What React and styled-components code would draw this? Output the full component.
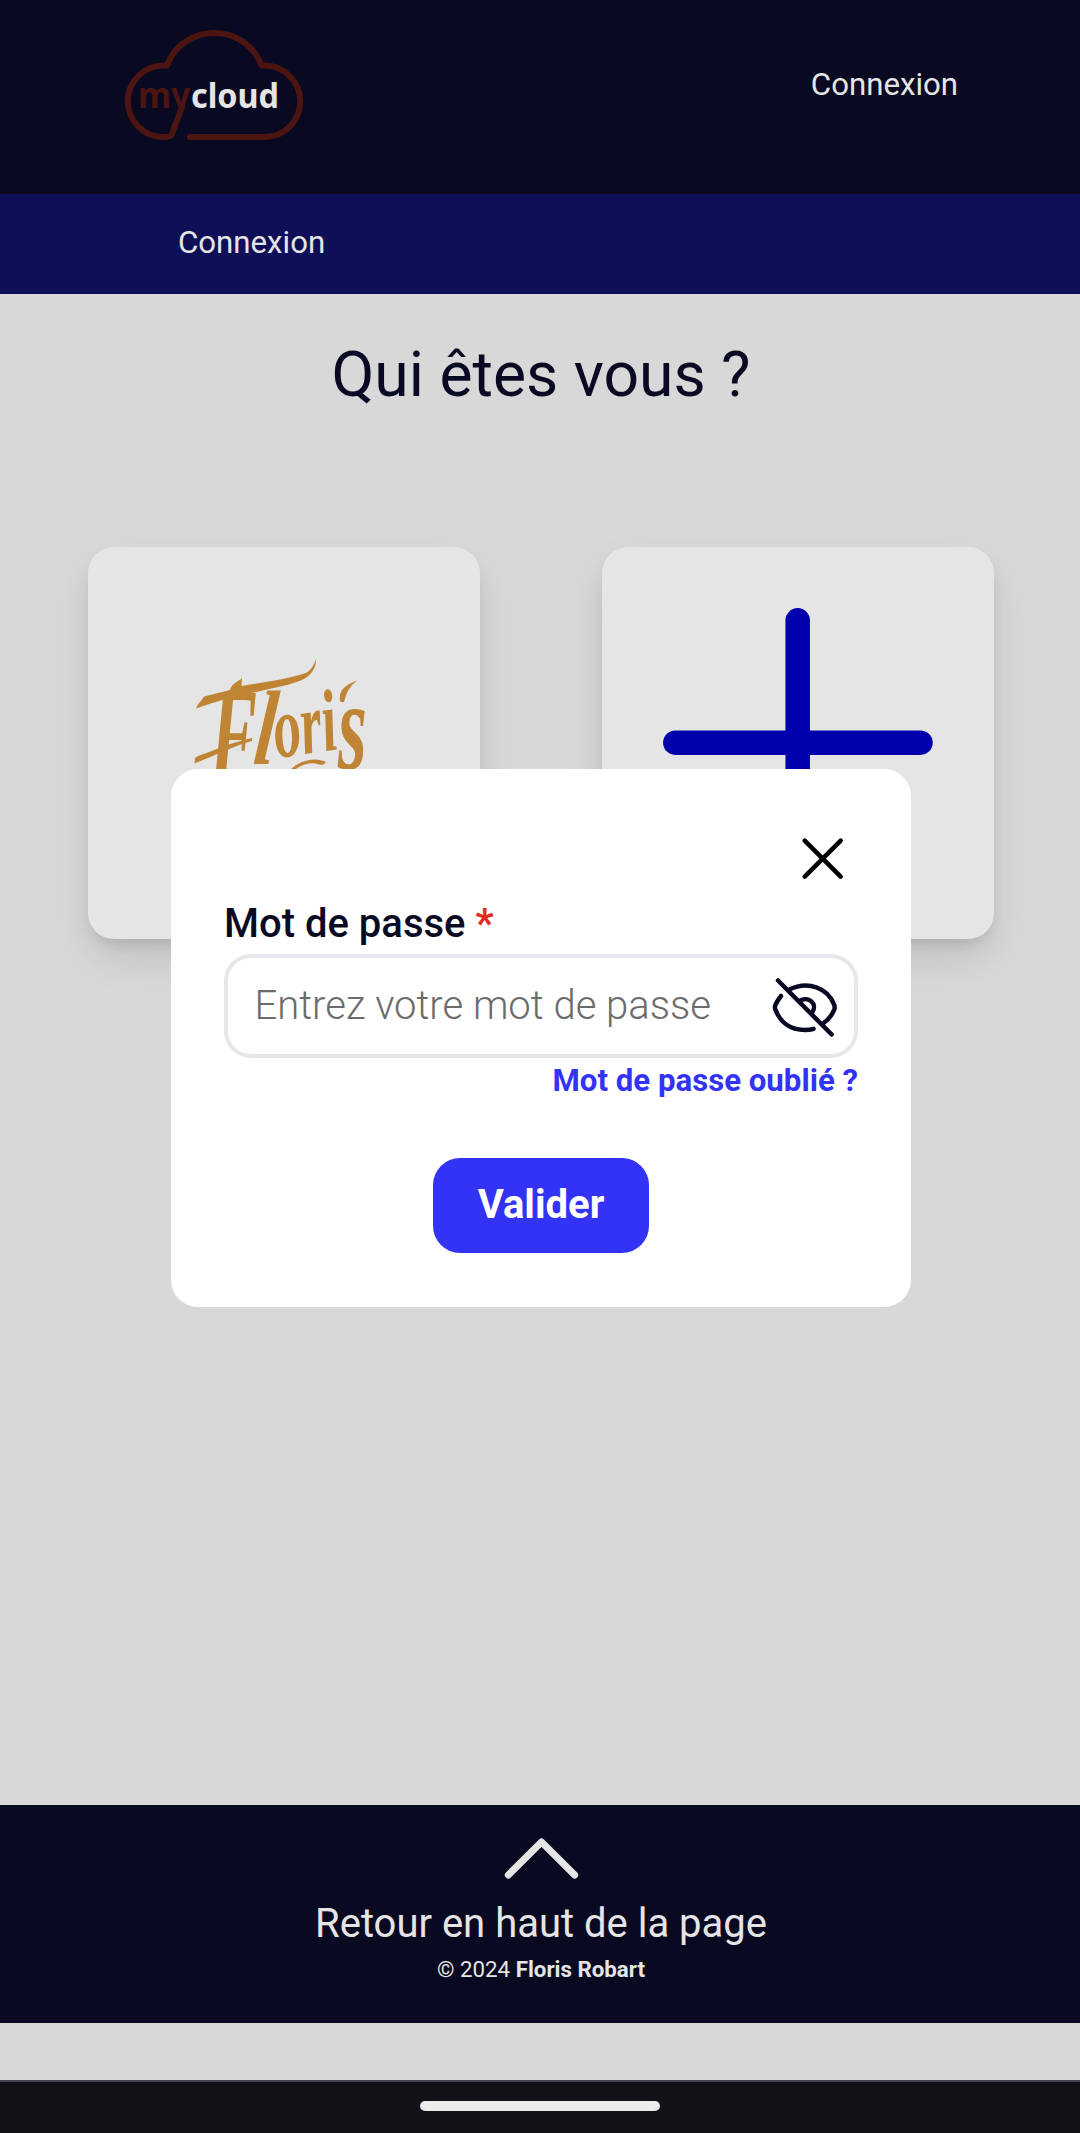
import React from "react";
import styled, { createGlobalStyle } from "styled-components";

const GlobalStyle = createGlobalStyle`
  *, *::before, *::after { box-sizing: border-box; }
  body { margin: 0; background: #d8d8d8; font-family: Roboto, "Noto Sans", sans-serif; color: #090924; }
  button, input { font: inherit; }
`;

const Page = styled.div`
  position: relative;
  display: flex;
  flex-direction: column;
  width: 1080px;
  height: 2133px;
  overflow: hidden;
  background: #d8d8d8;
`;

const Header = styled.header`
  display: flex;
  justify-content: space-between;
  align-items: flex-start;
  height: 194px;
  padding: 29px 122px 0 124px;
  background: #090922;
`;

const Logo = styled.svg`
  width: 180px;
  height: 112px;
`;

const TopLink = styled.a`
  padding-top: 36px;
  font-size: 31.2px;
  line-height: 40px;
  color: #e5e5e5;
`;

const SubNav = styled.nav`
  display: flex;
  align-items: center;
  height: 100px;
  padding: 0 178px 3px;
  font-size: 31.2px;
  line-height: 40px;
  color: #e5e5e5;
  background: #0f0f57;
`;

const Main = styled.main`
  display: flex;
  flex-direction: column;
  align-items: center;
  height: 1511px;
  padding-top: 43px;
`;

const Title = styled.h1`
  margin: 0;
  padding-left: 2px;
  font-size: 62.4px;
  font-weight: 400;
  line-height: 76px;
`;

const Cards = styled.div`
  display: flex;
  gap: 122px;
  margin-top: 134px;
  padding-left: 2px;
`;

const Card = styled.div`
  display: flex;
  width: 392px;
  height: 392px;
  border-radius: 26px;
  background: #e5e5e5;
  box-shadow: 0 20px 40px -4px rgba(0, 0, 0, 0.13), 0 8px 16px -6px rgba(0, 0, 0, 0.13);
`;

const CardArt = styled.svg`
  width: 100%;
  height: 100%;
`;

const Modal = styled.form`
  position: absolute;
  top: 769px;
  left: 171px;
  display: flex;
  flex-direction: column;
  width: 740px;
  height: 538px;
  padding: 53px;
  border-radius: 27px;
  background: #fff;
`;

const CloseButton = styled.button`
  align-self: flex-end;
  display: flex;
  width: 72px;
  height: 72px;
  padding: 0;
  border: 0;
  background: none;
`;

const Label = styled.label`
  margin-top: 6px;
  font-size: 40px;
  font-weight: 500;
  line-height: 48px;

  span { font-weight: 700; color: #de2c1c; }
`;

const Field = styled.div`
  display: flex;
  align-items: center;
  height: 104px;
  margin-top: 6px;
  padding: 0 14px 0 26.5px;
  border: 4px solid #e5e7eb;
  border-radius: 27px;
`;

const PasswordInput = styled.input`
  flex: 1;
  min-width: 0;
  height: 56px;
  padding: 0 0 2px;
  border: 0;
  outline: 0;
  background: none;
  font-size: 40px;
  font-weight: 300;

  &::placeholder { color: #6b6b6b; opacity: 1; }
`;

const EyeIcon = styled.svg`
  width: 70px;
  height: 64px;
  margin-top: 2px;
`;

const ForgotLink = styled.a`
  align-self: flex-end;
  margin-top: 3px;
  font-size: 31.2px;
  font-weight: 700;
  line-height: 40px;
  color: #3333f6;
`;

const SubmitButton = styled.button`
  align-self: center;
  width: 216px;
  height: 95px;
  margin-top: 57px;
  padding: 0 0 3px;
  border: 0;
  border-radius: 27px;
  font-size: 40px;
  font-weight: 700;
  color: #fff;
  background: #3333f6;
`;

const Footer = styled.footer`
  display: flex;
  flex-direction: column;
  align-items: center;
  height: 218px;
  padding: 29px 0 0 2px;
  color: #e5e5e5;
  background: #090922;
`;

const Chevron = styled.svg`
  width: 80px;
  height: 48px;
`;

const BackToTop = styled.a`
  margin-top: 18px;
  font-size: 40px;
  line-height: 48px;
`;

const Copyright = styled.small`
  margin-top: 7px;
  font-size: 22.3px;
  line-height: 28px;
`;

const SystemBar = styled.div`
  display: flex;
  justify-content: center;
  height: 53px;
  margin-top: 57px;
  padding-top: 19px;
  border-top: 2px solid #434651;
  background: #111217;
`;

const HomeHandle = styled.div`
  width: 240px;
  height: 10px;
  border-radius: 5px;
  background: #ebebeb;
`;

function CloudLogo() {
  return (
    <Logo viewBox="124 29 180 112" aria-label="mycloud">
      <defs>
        <clipPath id="above-baseline">
          <rect x="124" y="70" width="80" height="38" />
        </clipPath>
      </defs>
      <path
        d="M190 137H264.500A35.700 35.700 0 0 0 264.500 65.600H261.500C246 22.500 183 22 167 65.600H163.500A35.700 35.700 0 0 0 163.500 137H167Q170.500 137 172 134L182 107"
        fill="none"
        stroke="#4c1512"
        strokeWidth="6"
        strokeLinecap="round"
        strokeLinejoin="round"
      />
      <g clipPath="url(#above-baseline)">
        <text x="138" y="107.500" fontFamily="Noto Sans, sans-serif" fontSize="35" fontWeight="700" fill="#4c1512" textLength="52.500" lengthAdjust="spacingAndGlyphs">my</text>
      </g>
      <text x="191" y="107.500" fontFamily="Noto Sans, sans-serif" fontSize="34.500" fontWeight="700" fill="#e5e5e5" textLength="88" lengthAdjust="spacingAndGlyphs">cloud</text>
    </Logo>
  );
}

const SignatureText = styled.text`
  font-family: "Liberation Serif", serif;
  font-style: italic;
  font-weight: 700;
  font-size: ${(p) => p.$size}px;
`;

function FlorisSignature() {
  return (
    <CardArt viewBox="88 547 392 392" fill="#c08534">
      <SignatureText $size={128} transform="translate(210 777) scale(0.55 1)">F</SignatureText>
      <SignatureText $size={106} transform="translate(252 764) skewX(-6) scale(0.72 1)">l</SignatureText>
      <SignatureText $size={88} transform="translate(277 758) rotate(-8) scale(0.62 1)">ori</SignatureText>
      <SignatureText $size={128} transform="translate(338 769) scale(0.58 1)">s</SignatureText>
      <path d="M196 708.500C198 703 200 703 204 696.500L230 690C231 684 239 681 242 678L241.500 686C265 682 288 679 306 673C312 670 316 661 316 658C317 667 311 675 304 679C290 686 266 689 239 696C223 699 210 704 196 708.500Z" />
      <path d="M195 758L198 756C215 750 233 742 252 738V741C236 745 216 755 194.500 763.500Z" />
      <path d="M340.500 702Q336 688 357 680.500Q347 688 344 702Z" />
      <path d="M290 770C301 759 317 757 326 762Q324 766 319 764.500C309 761 299 766 294 771Z" />
    </CardArt>
  );
}

export default function App() {
  return (
    <Page>
      <GlobalStyle />
      <Header>
        <CloudLogo />
        <TopLink>Connexion</TopLink>
      </Header>
      <SubNav>Connexion</SubNav>
      <Main>
        <Title>Qui êtes vous ?</Title>
        <Cards>
          <Card>
            <FlorisSignature />
          </Card>
          <Card>
            <CardArt viewBox="602 547 392 392" stroke="#0000ad" strokeWidth="24.500" strokeLinecap="round">
              <path d="M797.700 620.300V865M675.300 742.700H920.500" />
            </CardArt>
          </Card>
        </Cards>
      </Main>
      <Footer>
        <Chevron viewBox="501 1834 80 48" fill="none" stroke="#e5e5e5" strokeWidth="7" strokeLinecap="round" strokeLinejoin="round">
          <path d="M508.300 1875L541.500 1842L574.700 1875" />
        </Chevron>
        <BackToTop>Retour en haut de la page</BackToTop>
        <Copyright>© 2024 <b>Floris Robart</b></Copyright>
      </Footer>
      <SystemBar>
        <HomeHandle />
      </SystemBar>

      <Modal>
        <CloseButton type="button" aria-label="Fermer">
          <svg width="72" height="72" viewBox="786 822 72 72" stroke="#000" strokeWidth="4.500" strokeLinecap="round">
            <path d="M804.700 840.700L840.700 876.700M840.700 840.700L804.700 876.700" />
          </svg>
        </CloseButton>
        <Label>Mot de passe <span>*</span></Label>
        <Field>
          <PasswordInput type="password" placeholder="Entrez votre mot de passe" />
          <EyeIcon viewBox="770 975 70 64" fill="none" stroke="#090924" strokeWidth="4.500" strokeLinecap="round" strokeLinejoin="round">
            <path d="M778 980.500L831.700 1034.500" />
            <path d="M781 996Q777 1001 775.200 1005.500Q774.600 1007.500 775.400 1009.500C780 1022 790 1030 805 1030Q810 1030 813.500 1028.800" />
            <path d="M788.500 990C808 980 828 988 834.300 1005Q835 1007.500 834.300 1009.500Q831 1018 823 1023.500" />
            <path d="M799.500 1001C808 995.500 818.500 1003.500 812 1013" />
          </EyeIcon>
        </Field>
        <ForgotLink>Mot de passe oublié ?</ForgotLink>
        <SubmitButton type="button">Valider</SubmitButton>
      </Modal>
    </Page>
  );
}
